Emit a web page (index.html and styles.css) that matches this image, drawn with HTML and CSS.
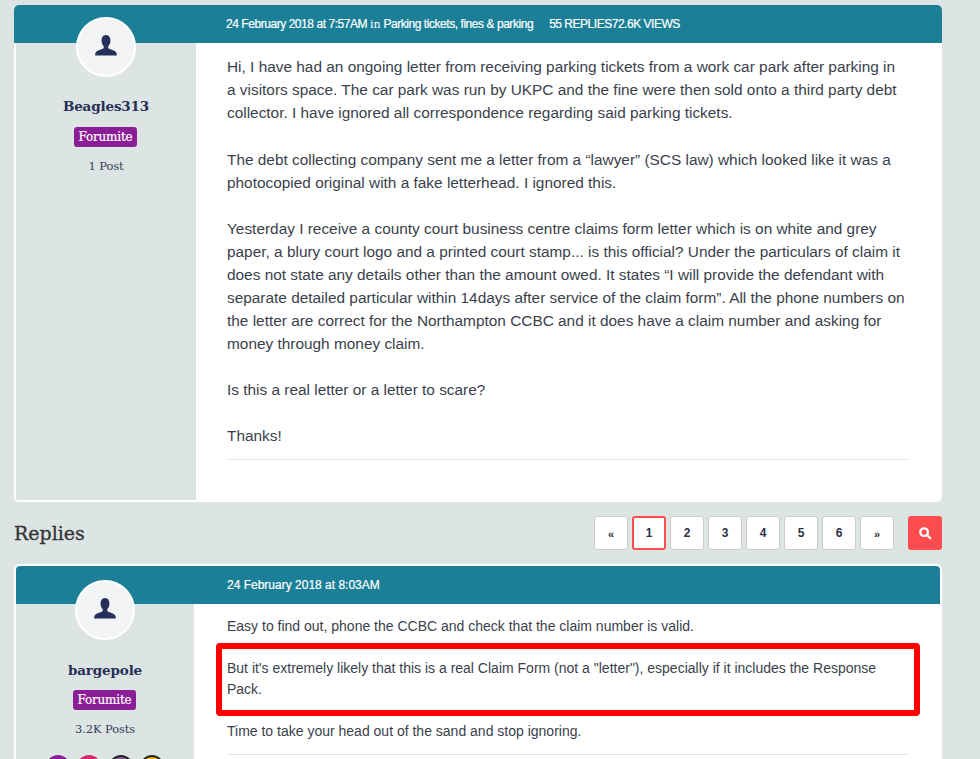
FILE: index.html
```html
<!DOCTYPE html>
<html lang="en">
<head>
<meta charset="utf-8">
<title>Parking tickets thread</title>
<link rel="stylesheet" href="styles.css">
</head>
<body>
<main class="page">
  <article class="post post-first">
    <header class="post-head head-first">
      <span>24 February 2018 at 7:57AM <span class="in">in</span> Parking tickets, fines &amp; parking</span>
      <span class="stats">55 REPLIES72.6K VIEWS</span>
    </header>
    <div class="post-main">
      <aside class="side side-first">
        <div class="avatar">
          <svg viewBox="0 0 24 24" class="avatar-icon"><path d="M12 1c-3 0-4.600 2.800-4.400 6.200.1 2 .9 3.700 1.900 4.800.5.600.4 1.900-.3 2.400C7.500 15.500 2 16.300 1.300 19.500c-.1.700-.1 1.500-.1 2h21.600c0-.5 0-1.300-.1-2-.7-3.200-6.200-4-7.900-5.100-.7-.5-.8-1.800-.3-2.400 1-1.100 1.800-2.800 1.900-4.800C16.600 3.800 15 1 12 1z"/></svg>
        </div>
        <div class="name">Beagles313</div>
        <div class="role">Forumite</div>
        <div class="count">1 Post</div>
      </aside>
      <div class="body body-first">
        <p>Hi, I have had an ongoing letter from receiving parking tickets from a work car park after parking in a visitors space. The car park was run by UKPC and the fine were then sold onto a third party debt collector. I have ignored all correspondence regarding said parking tickets.</p>
        <p>The debt collecting company sent me a letter from a “lawyer” (SCS law) which looked like it was a photocopied original with a fake letterhead. I ignored this.</p>
        <p>Yesterday I receive a county court business centre claims form letter which is on white and grey paper, a blury court logo and a printed court stamp... is this official? Under the particulars of claim it does not state any details other than the amount owed. It states “I will provide the defendant with separate detailed particular within 14days after service of the claim form”. All the phone numbers on the letter are correct for the Northampton CCBC and it does have a claim number and asking for money through money claim.</p>
        <p>Is this a real letter or a letter to scare?</p>
        <p class="last">Thanks!</p>
        <div class="rule"></div>
      </div>
    </div>
  </article>

  <div class="replies-bar">
    <h2 class="replies-title">Replies</h2>
    <nav class="pager">
      <a class="pg pg-arrow">«</a>
      <a class="pg pg-on">1</a>
      <a class="pg">2</a>
      <a class="pg">3</a>
      <a class="pg">4</a>
      <a class="pg">5</a>
      <a class="pg">6</a>
      <a class="pg pg-arrow">»</a>
      <a class="search-btn">
        <svg viewBox="0 0 24 24" class="search-icon"><circle cx="10.500" cy="10.500" r="6.500"/><path d="M15.500 15.500 21 21"/></svg>
      </a>
    </nav>
  </div>

  <article class="post post-reply">
    <header class="post-head head-reply">
      <span>24 February 2018 at 8:03AM</span>
    </header>
    <div class="post-main">
      <aside class="side side-reply">
        <div class="avatar">
          <svg viewBox="0 0 24 24" class="avatar-icon"><path d="M12 1c-3 0-4.600 2.800-4.400 6.200.1 2 .9 3.700 1.900 4.800.5.600.4 1.900-.3 2.400C7.500 15.500 2 16.300 1.300 19.500c-.1.700-.1 1.500-.1 2h21.600c0-.5 0-1.300-.1-2-.7-3.200-6.200-4-7.900-5.100-.7-.5-.8-1.800-.3-2.400 1-1.100 1.800-2.800 1.900-4.800C16.600 3.800 15 1 12 1z"/></svg>
        </div>
        <div class="name">bargepole</div>
        <div class="role">Forumite</div>
        <div class="count">3.2K Posts</div>
        <div class="badges">
          <span class="badge b1"></span>
          <span class="badge b2"></span>
          <span class="badge b3"></span>
          <span class="badge b4"></span>
        </div>
      </aside>
      <div class="body body-reply">
        <p>Easy to find out, phone the CCBC and check that the claim number is valid.</p>
        <p class="marked">But it's extremely likely that this is a real Claim Form (not a "letter"), especially if it includes the Response Pack.<span class="red-box"></span></p>
        <p class="last">Time to take your head out of the sand and stop ignoring.</p>
        <div class="rule"></div>
      </div>
    </div>
  </article>
</main>
</body>
</html>
```

FILE: styles.css
```css
* { box-sizing: border-box; }
html, body { margin: 0; height: 759px; overflow: hidden; }
body { background: #dde4e4; font-family: "Liberation Sans", Arial, sans-serif; color: #2d3142; }
.page { width: 928px; margin-left: 14px; margin-top: 5px; }
.post { background: #fff; border-radius: 5px; overflow: hidden; }
.post-first { height: 497px; }
.post-reply { border: 2px solid #fff; border-bottom: 0; height: 195px; border-radius: 6px 6px 0 0; }
.post-head { background: #1b7f97; color: #fff; font-weight: 400; display: flex; align-items: center; height: 38px; padding-left: 212px; font-size: 12px; }
.head-first { letter-spacing: -0.45px; -webkit-text-stroke: 0.2px #fff; }
.head-reply { padding-left: 211px; -webkit-text-stroke: 0.2px #fff; }
.in { font-family: "DejaVu Serif", serif; font-size: 11px; letter-spacing: 0; -webkit-text-stroke: 0; }
.stats { margin-left: 16px; letter-spacing: -0.48px; }
.post-main { display: flex; height: calc(100% - 38px); }
.side { flex: none; display: flex; flex-direction: column; align-items: center; background: #dde4e4; position: relative; }
.side-first { width: 180px; margin-left: 2px; margin-bottom: 2px; }
.side-reply { width: 178px; }
.avatar { width: 60px; height: 60px; margin-top: -26px; border-radius: 50%; background: #f3f4f5; border: 2px solid #fff; display: flex; align-items: center; justify-content: center; flex: none; position: relative; }
.side-reply .avatar { margin-top: -24px; }
.avatar-icon { width: 24px; height: 24px; fill: #24305a; margin-bottom: 3px; }
.name { font-family: "DejaVu Serif", serif; font-weight: 700; font-size: 13.500px; color: #262f56; margin-top: 19px; line-height: 20px; letter-spacing: -0.15px; }
.side-reply .name { margin-top: 20px; }
.role { font-family: "DejaVu Serif", serif; background: #8b1e97; color: #fff; font-size: 12px; border-radius: 3px; height: 20px; line-height: 20px; width: 63px; text-align: center; margin-top: 11px; margin-right: 1px; letter-spacing: -0.2px; -webkit-text-stroke: 0.2px #fff; }
.side-reply .role { margin-top: 10px; }
.count { font-family: "DejaVu Serif", serif; font-size: 11.500px; color: #333d5a; margin-top: 11px; line-height: 16px; letter-spacing: -0.1px; }
.badges { display: flex; gap: 7.300px; margin-top: 18px; }
.badge { width: 24px; height: 24px; border-radius: 50%; flex: none; }
.b1 { background: #8b1e97; }
.b2 { background: #d62a6e; }
.b3 { background: #8f5f9f; border: 2px solid #222; }
.b4 { background: #f5b400; border: 2px solid #222; }
.body { flex: 1; font-size: 14.500px; color: #3a3f4c; }
.body-first { padding: 12.300px 34px 0 31px; font-size: 15.400px; line-height: 23.060px; }
.body-first p { margin: 0 0 23.060px; padding-right: 3px; }
.body-first p.last { margin-bottom: 12px; }
.body-reply { padding: 12px 32px 0 33px; font-size: 14px; line-height: 21px; }
.body-reply p { margin: 0 0 21px; }
.body-reply p.last { margin-bottom: 12px; }
.body-reply p.marked { position: relative; }
.red-box { position: absolute; left: -11px; right: -12px; top: -15px; bottom: -16px; border: 6px solid #f00; border-radius: 4px; }
.rule { height: 1px; background: #dde4e4; }
.replies-bar { display: flex; align-items: center; justify-content: space-between; height: 62px; }
.replies-title { margin: 0; font-family: "DejaVu Serif", serif; font-weight: 400; font-size: 19px; color: #333; -webkit-text-stroke: 0.3px #333; }
.pager { display: flex; align-items: center; gap: 4px; }
.pg { width: 34px; height: 34px; background: #fff; border: 1px solid #ccc; border-radius: 3px; display: flex; align-items: center; justify-content: center; font-size: 12px; font-weight: 700; color: #2d3142; }
.pg-on { border: 2px solid #ff4d4f; }
.pg-arrow { font-size: 11px; padding-top: 2px; }
.search-btn { width: 34px; height: 34px; margin-left: 10px; background: #ff4d4f; border-radius: 3px; display: flex; align-items: center; justify-content: center; }
.search-icon { width: 14px; height: 14px; fill: none; stroke: #fff; stroke-width: 4; stroke-linecap: round; }
```
